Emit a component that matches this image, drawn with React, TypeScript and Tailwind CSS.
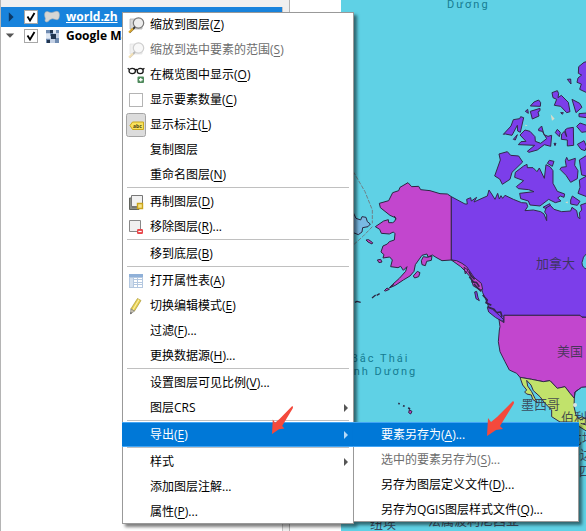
import type { ReactNode } from "react";

const font = "font-['Open_Sans','Noto_Sans_CJK_SC',sans-serif]";

function Tick() {
  return (
    <svg viewBox="0 0 14 14" className="pointer-events-none absolute inset-0 size-3.5" fill="none" stroke="#000" strokeWidth="1.8">
      <path d="M3.5 6.5 L6 10.5 L10.5 3" />
    </svg>
  );
}

function LayerRow({ name, selected, icon }: { name: string; selected?: boolean; icon: ReactNode }) {
  return (
    <label
      className={
        selected
          ? "flex h-5 items-center bg-[#1883dc] text-white underline"
          : "flex h-[18px] items-center text-black"
      }
    >
      <svg viewBox="0 0 10 10" className="ml-[3px] size-3 shrink-0">
        {selected ? <path d="M4 1 L8 5 L4 9Z" fill="#0b3866" /> : <path d="M1.5 3 H8.5 L5 6.5Z" fill="#555" />}
      </svg>
      <span className="relative ml-2 size-3.5 shrink-0">
        <input type="checkbox" defaultChecked className="block size-3.5 appearance-none border border-[#a8a8a8] bg-white" />
        <Tick />
      </span>
      <span className="ml-1.5 mr-1.5 shrink-0">{icon}</span>
      <span className="whitespace-nowrap text-xs font-bold">{name}</span>
    </label>
  );
}

function PolygonIcon() {
  return (
    <svg viewBox="0 0 16 16" className="size-4">
      <path
        d="M.6 5 Q.8 2.4 3.4 2.6 Q7 4.6 10 3 Q13.4 1.4 15 3.4 Q16 6 15 9 Q14.4 11.4 12 10.6 Q8 8.6 5.4 11 Q4.4 13.4 2 13 Q.4 12 1.4 9.4 Q.4 7 .6 5Z"
        fill="#d6d6d4"
        stroke="#a9aeb2"
        strokeWidth=".6"
      />
    </svg>
  );
}

function RasterIcon() {
  return (
    <svg viewBox="0 0 16 16" className="size-4" shapeRendering="crispEdges">
      <rect x="2" y="2" width="13" height="13" fill="#c3d0e4" />
      <path d="M2 2h4v3h-4zM12 2h3v3h-3zM2 11h4v4h-4zM6 5h3v3h-3zM11 10h4v5h-4z" fill="#6f8bb0" />
      <path d="M6 2h3v3h-3zM7 6h5v5h-5zM3 12h3v3h-3z" fill="#22354f" />
      <path d="M2 6h4v4h-4zM9 2h3v3h-3z" fill="#dfe8f4" />
    </svg>
  );
}

function MagnifierIcon() {
  return (
    <svg viewBox="0 0 18 18" className="size-4.5">
      <path d="M3 3h12v10H3z" fill="#d8d8d8" stroke="#aaa" strokeWidth=".7" />
      <circle cx="11.5" cy="7" r="5.2" fill="#ededed" stroke="#777" strokeWidth="1.2" />
      <path d="M8 11 L6 13" stroke="#333" strokeWidth="1.8" />
      <path d="M6 12.5 L2 16.5" stroke="#d9a52b" strokeWidth="2" />
      <path d="M7 13.2 L3 17" stroke="#6b5116" strokeWidth=".6" />
    </svg>
  );
}

function GlassesIcon() {
  return (
    <svg viewBox="0 0 18 18" className="size-4.5" fill="none">
      <g stroke="#1a1a1a" strokeWidth="1.3">
        <ellipse cx="5.2" cy="5" rx="3.2" ry="2.6" />
        <ellipse cx="13.2" cy="5" rx="3" ry="2.6" />
        <path d="M8.2 4 Q9.3 3 10.3 4 M2.5 3.5 L.7 2.3 M15.8 3.5 L17.4 2.3" />
      </g>
      <rect x="10.5" y="10.5" width="6.5" height="6.5" rx="1" fill="#4f8a5c" />
      <path d="M13.75 12v3.6M12 13.75h3.6" stroke="#fff" strokeWidth="1.3" />
    </svg>
  );
}

function LabelIcon() {
  return (
    <svg viewBox="0 0 20 24" className="h-6 w-5">
      <rect x=".5" y=".5" width="19" height="23" rx="2" fill="#dcdcdc" stroke="#a5a5a5" />
      <path d="M4 12.5 L6.5 9 H17.5 V16.5 H6.5Z" fill="#f9e25c" stroke="#c9a81c" strokeLinejoin="round" />
      <text x="7" y="14.5" fontSize="5" fontWeight="700" fill="#473d13">abc</text>
    </svg>
  );
}

function DuplicateIcon() {
  return (
    <svg viewBox="0 0 18 18" className="size-4.5">
      <path d="M2.5 5v11.5H12V14H5V5z" fill="#8d9189" stroke="#62655f" />
      <path d="M4.5 2.5h11v11h-11z" fill="#f1f1f1" stroke="#777" />
      <path d="M10.5 10.5h5v5h-5z" fill="#f6e389" stroke="#c9a41c" strokeWidth="1.4" />
    </svg>
  );
}

function RemoveIcon() {
  return (
    <svg viewBox="0 0 18 18" className="size-4.5">
      <path d="M2.5 2.5h11v11h-11z" fill="#f0f0f0" stroke="#888" />
      <rect x="10" y="11" width="6" height="5" rx="1.2" fill="#e8464a" />
      <path d="M11.3 13.5h3.4" stroke="#fff" strokeWidth="1.2" />
    </svg>
  );
}

function TableIcon() {
  return (
    <svg viewBox="0 0 18 18" className="size-4.5" shapeRendering="crispEdges">
      <rect x="2" y="2" width="14" height="14" fill="#b4c8e0" />
      <rect x="2" y="2" width="14" height="3" fill="#8fb0d8" />
      <path d="M3 6h3v9h-3z" fill="#d4e0ee" />
      <path d="M7 6h3v1h-3zM11 6h4v1h-4zM7 8h3v2h-3zM11 8h4v2h-4zM7 11h3v1h-3zM11 11h4v1h-4zM7 13h3v2h-3zM11 13h4v2h-4z" fill="#fff" />
    </svg>
  );
}

function PencilIcon() {
  return (
    <svg viewBox="0 0 18 18" className="size-4.5">
      <path d="M10.5 1.5 L14 3.5 L7.5 14 L3.8 12Z" fill="#e7cf4e" stroke="#a8963c" strokeWidth=".7" />
      <path d="M12 2.5 L6 12.8" stroke="#fbf0a8" strokeWidth="1.1" />
      <path d="M3.8 12 L7.5 14 L3.5 17Z" fill="#c9c2ae" stroke="#777" strokeWidth=".6" />
      <path d="M3.5 17 L3.6 15.2 L5 16Z" fill="#333" />
    </svg>
  );
}

type Item = {
  text: string;
  accel?: string;
  more?: boolean;
  icon?: ReactNode;
  kind?: "disabled" | "active";
  arrow?: boolean;
  check?: boolean;
};

const layerMenu: (Item | null)[] = [
  { text: "缩放到图层", accel: "Z", icon: <MagnifierIcon /> },
  { text: "缩放到选中要素的范围", accel: "S", icon: <MagnifierIcon />, kind: "disabled" },
  { text: "在概览图中显示", accel: "O", icon: <GlassesIcon /> },
  { text: "显示要素数量", accel: "C", check: true },
  { text: "显示标注", accel: "L", icon: <LabelIcon /> },
  { text: "复制图层" },
  { text: "重命名图层", accel: "N" },
  null,
  { text: "再制图层", accel: "D", icon: <DuplicateIcon /> },
  { text: "移除图层", accel: "R", more: true, icon: <RemoveIcon /> },
  null,
  { text: "移到底层", accel: "B" },
  null,
  { text: "打开属性表", accel: "A", icon: <TableIcon /> },
  { text: "切换编辑模式", accel: "E", icon: <PencilIcon /> },
  { text: "过滤", accel: "F", more: true },
  { text: "更换数据源", accel: "H", more: true },
  null,
  { text: "设置图层可见比例", accel: "V", more: true },
  { text: "图层CRS", arrow: true },
  null,
  { text: "导出", accel: "E", arrow: true, kind: "active" },
  null,
  { text: "样式", arrow: true },
  { text: "添加图层注解", more: true },
  { text: "属性", accel: "P", more: true },
];

const exportMenu: Item[] = [
  { text: "要素另存为", accel: "A", more: true, kind: "active" },
  { text: "选中的要素另存为", accel: "S", more: true, kind: "disabled" },
  { text: "另存为图层定义文件", accel: "D", more: true },
  { text: "另存为QGIS图层样式文件", accel: "Q", more: true },
];

function ItemBody({ item }: { item: Item }) {
  return (
    <>
      <span className="flex w-7 shrink-0 items-center justify-center">
        {item.check ? (
          <input type="checkbox" className="block size-3.5 appearance-none border border-[#b4b4b4] bg-white" />
        ) : item.kind === "disabled" ? (
          <span className="opacity-35">{item.icon}</span>
        ) : (
          item.icon
        )}
      </span>
      <span className="flex-1 whitespace-nowrap text-left">
        {item.text}
        {item.accel && (
          <>
            (<u className="underline-offset-2">{item.accel}</u>)
          </>
        )}
        {item.more && "..."}
      </span>
      {item.arrow && (
        <svg viewBox="0 0 4 8" className={item.kind === "active" ? "mr-1.5 h-2 w-1 fill-[#b5daf7]" : "mr-1.5 h-2 w-1 fill-[#555]"}>
          <path d="M0 0 L4 4 L0 8Z" />
        </svg>
      )}
    </>
  );
}

function MenuItem({ item }: { item: Item }) {
  if (item.check) {
    return (
      <label className="flex h-[25px] w-full items-center text-xs text-black">
        <ItemBody item={item} />
      </label>
    );
  }
  const look =
    item.kind === "active"
      ? "bg-[#0078d7] text-white border-[#42a5f5]"
      : item.kind === "disabled"
        ? "text-[#6d6d6d] border-transparent"
        : "text-black border-transparent";
  return (
    <button type="button" disabled={item.kind === "disabled"} className={`flex h-[25px] w-full items-center border-y text-xs ${look}`}>
      <ItemBody item={item} />
    </button>
  );
}

function RedArrow({ className }: { className: string }) {
  return (
    <svg viewBox="0 0 27 35" preserveAspectRatio="none" className={className}>
      <path d="M26 0 Q28 1 26 4 L13 25 L16 28 L9 29 L0 35 L1 17 L4 21 L10 16Z" fill="#f4493c" />
    </svg>
  );
}

function WorldMap() {
  return (
    <svg viewBox="341 0 245 531" preserveAspectRatio="xMinYMin slice" className="block h-full w-full bg-[#5fd1e5]">
      <g transform="translate(340 160) scale(.33333)" stroke="#2c2540" strokeWidth="3" strokeLinejoin="round">
        <path d="M40 35 L75 95 L97 150 V190 M97 200 L70 228 L40 255" fill="none" stroke="#6f8087" strokeDasharray="12 4" />
        <path d="M40 158 L48 175 L62 180 L66 170 L78 172 L82 185 L91 192 L84 200 L68 203 L66 216 L55 224 L40 218Z" fill="#79b9e3" />
        <path
          d="M204 68 L180 82 L176 92 L158 98 L146 122 L118 130 L121 143 L150 166 L168 174 L164 184 L158 188 L146 188 L145 179 L131 183 L106 200 L119 208 L124 220 L148 222 L160 216 L165 221 L163 240 L148 245 L142 252 L129 258 L123 276 L132 284 L129 294 L149 291 L157 300 L152 320 L174 323 L182 319 L190 331 L201 320 L197 334 L178 355 L157 374 L148 384 L166 376 L190 360 L210 348 L222 334 L226 314 L246 286 L261 282 L264 291 L277 285 L288 292 L306 302 L334 300 L334 110 L322 102 L300 101 L270 92 L242 89 L236 79 L215 80Z"
          fill="#c246ce"
        />
        <path d="M244 302 L250 290 L262 292 L276 288 L274 301 L260 304 L256 317 L246 314Z M220 348 L232 334 L240 338 L236 350 L224 354Z M78 240 L86 239 L98 248 L96 252 L84 246Z M112 300 L122 298 L126 306 L117 308Z M133 392 L141 384 L148 388 L137 393Z M150 382 L162 373 M163 168 L168 178" fill="#c246ce" />
        <path d="M96 414 L107 405 M110 406 L119 401 M45 427 L51 424 L62 427" fill="none" strokeWidth="4" />
        <path d="M175 730 l4 2 M189 737 l5 2 M205 743 l5 5" fill="none" strokeWidth="5" />
        <path d="M208 750 l8 4 l-4 8 l-6 -4z" fill="#c246ce" />
      </g>
      <g transform="translate(450 130) scale(.33333)" stroke="#33274a" strokeWidth="3" strokeLinejoin="round">
        <path
          d="M4 200 L45 222 L52 222 L50 208 L62 203 L64 213 L80 202 L72 216 L96 205 L112 198 L117 180 L125 192 L135 208 L143 190 L148 207 L153 197 L158 205 L165 196 L190 208 L215 218 L230 219 L233 230 L225 242 L250 240 L272 245 L282 252 L290 272 L290 255 L284 246 L290 230 L300 225 L312 238 L335 245 L362 243 L366 232 L380 242 L384 262 L390 266 L388 248 L395 240 L392 225 L412 218 L412 368 Q397 380 396 398 Q396 414 412 418 L412 562 L396 561 L390 556 L162 556 L162 576 L150 560 L136 556 L118 540 L114 525 L106 505 L98 488 L92 466 L70 445 L50 415 L36 402 L20 394 L4 390Z"
          fill="#7c3eea"
        />
        <path d="M4 390 L20 392 L36 400 L50 410 L72 442 L94 460 L98 478 L92 480 L70 468 L62 442 L44 422 L32 410Z M42 412 L54 420 L46 432Z" fill="#c246ce" />
        <path d="M56 424 L64 438 L74 448 M64 455 L80 458 L88 470 M72 462 L84 475 L94 484 M58 440 L70 455 M98 495 L112 510 L108 518 L124 526 M112 530 L132 538 L140 548 L152 546 L156 560 M120 540 L145 556" fill="none" strokeWidth="5" />
        <path d="M74 486 L80 484 L84 502 L88 512 L78 506Z M112 532 L128 538 L148 556 L162 570 L156 574 L136 562 L116 546Z" fill="#7c3eea" />
        <path
          d="M147 72 L172 65 L182 76 L206 78 L218 96 L186 127 L180 148 L157 163 L149 147 L134 138 L151 90Z M221 108 L231 103 L232 113 L249 113 L261 125 L268 114 L283 145 L288 104 L300 110 L309 122 L309 160 L322 184 L344 192 L342 202 L331 198 L323 204 L333 213 L316 218 L296 208 L270 228 L240 225 L235 213 L212 206 L209 190 L252 185 L236 179 L205 176 L199 170 L221 152 L194 142 L196 127Z M292 100 L298 91 L312 94 L307 109Z M346 92 L350 82 L355 92 L376 85 L374 106 L384 122 L382 146 L362 157 L348 136 L330 118 L334 112 L349 110Z M388 90 L410 76 L410 138 L395 135Z M388 150 L410 138 L410 200 L384 190 L390 172Z M362 210 L367 198 L390 214 L382 226 L362 222Z M279 232 L299 221 L301 226 L286 235Z"
          fill="#7c3eea"
        />
        <path
          d="M160 13 L183 -12 L190 -31 L209 -34 L212 -40 L221 -37 L211 7 L203 3 L202 -14 L186 16 L166 12Z M190 28 L202 14 L196 30Z M210 15 L225 0 L240 4 L255 20 L256 34 L272 40 L290 26 L277 4 L266 2 L266 -3 L275 -12 L282 14 L294 19 L305 16 L302 49 L283 44 L262 60 L237 67 L232 64 L254 46 L205 44 L213 35 L228 34Z M241 -72 L252 -84 L266 -90 L272 -82 L271 -71Z M241 -56 L270 -65 L270 -58 L264 -54 L267 -42 L247 -33Z M226 -56 L233 -62 L235 -50Z M306 -112 L322 -118 L326 -109 L324 -97 L334 -104 L355 -83 L360 -55 L350 -52 L332 -71 L313 -74 L320 -92 L309 -97Z M366 -92 L389 -80 L396 -68 L378 -52Z M352 -152 L362 -153 L363 -138Z M387 -49 L410 -51 L410 -37 L387 -40Z M380 -11 L390 -21 L410 -14 L410 5 L395 7Z M402 -203 L386 -190 L385 -170 L395 -165 L384 -156 L381 -143 L394 -138 L389 -122 L410 -112 L410 -205Z M316 8 L322 -2 L331 7 L328 20Z M335 12 L343 4 L350 20 L345 0 L352 -5 L370 -8 L371 46 L352 48 L352 30 L334 28Z M382 43 L402 32 L410 50 L405 62 L393 58Z M312 40 L318 40 L315 47Z M332 -52 L340 -52 L337 -47Z"
          fill="#7c3eea"
        />
        <path d="M302 -47 L314 -34 L306 -28Z M346 218 l6 -4 l2 6z M225 -16 l8 2 l-6 3z" fill="#d9dcc9" stroke="none" />
        <path d="M162 556 H390 L396 562 H412 V772 L395 772 L375 786 L373 805 L360 790 L345 770 L330 774 L322 775 L300 752 L280 755 L245 748 L210 742 L200 730 L178 720 L165 695 L150 665 L145 635 L148 600 L150 590 L147 568 L162 578Z" fill="#c246ce" />
        <path d="M395 772 Q372 790 374 815 L378 855 L397 860 L412 862 V772Z" fill="#5fd1e5" stroke="none" />
        <path d="M210 742 L245 748 L280 755 L300 752 L322 775 L345 770 L360 790 L373 805 L372 830 L378 855 L385 865 L397 860 L412 870 V905 L388 890 L365 876 L330 876 L305 860 L305 840 L285 820 L270 800 L250 782 L243 765 L230 751 L233 768 L245 785 L255 805 L262 818 L248 808 L244 795 L230 792 L224 786 L230 780 L218 765Z" fill="#c1e26b" />
        <path d="M412 770 L395 772 L375 786 L373 805 M390 870 L412 862 M392 880 L412 886" fill="none" />
      </g>
      <circle cx="575" cy="405" r="2" fill="#dce3e1" />
      <g className="font-[Roboto,sans-serif]" fontSize="11" letterSpacing="2" fill="#167c92">
        <text x="447" y="8">Dương</text>
        <text x="351" y="362">Bắc Thái</text>
        <text x="349" y="375">ình Dương</text>
      </g>
      <g className="font-['Noto_Sans_CJK_SC',sans-serif]" fontSize="13" fill="#333347" fillOpacity=".85">
        <text x="536" y="268">加拿大</text>
        <text x="557" y="356">美国</text>
        <text x="521" y="409">墨西哥</text>
        <text x="561" y="422">伯利兹</text>
        <text x="569" y="443">危地</text>
        <text x="567" y="459">哥达</text>
        <text x="579" y="476">四</text>
        <text x="370" y="528">纽埃</text>
        <text x="428" y="525">法属波利尼西亚</text>
      </g>
    </svg>
  );
}

export default function App() {
  return (
    <main className={`relative flex h-screen overflow-hidden bg-white ${font}`}>
      <section className="flex w-[290px] shrink-0 flex-col border-x border-[#b4b4b4] bg-white">
        <div className="h-[7px] shrink-0 bg-[#f0f0f0]" />
        <div className="flex flex-1">
          <div className="flex-1">
            <LayerRow name="world.zh" selected icon={<PolygonIcon />} />
            <LayerRow name="Google Maps" icon={<RasterIcon />} />
          </div>
          <div className="w-[7px] border-l border-[#c4c4c4] bg-[#f0f0f0]" />
        </div>
      </section>
      <div className="w-[51px] shrink-0 bg-white" />
      <section className="min-w-0 flex-1">
        <WorldMap />
      </section>

      <nav className="absolute left-[122px] top-3 w-[232px] bg-white shadow-[inset_0_0_0_1px_#999,3px_3px_3px_rgba(0,0,0,0.5)]">
        {layerMenu.map((item, i) =>
          item ? <MenuItem key={i} item={item} /> : <hr key={i} className="mx-[5px] h-0.5 border-0 border-t border-[#c0c0c0]" />,
        )}
      </nav>
      <nav className="absolute left-[353px] top-[422px] w-[226px] bg-white shadow-[inset_0_0_0_1px_#999,3px_3px_3px_rgba(0,0,0,0.5)]">
        {exportMenu.map((item) => (
          <MenuItem key={item.text} item={item} />
        ))}
      </nav>
      <div className="pointer-events-none absolute left-[272px] top-[406px]">
        <RedArrow className="block h-7 w-[21px]" />
      </div>
      <div className="pointer-events-none absolute left-[487px] top-[401px]">
        <RedArrow className="block h-[35px] w-[27px]" />
      </div>
    </main>
  );
}
